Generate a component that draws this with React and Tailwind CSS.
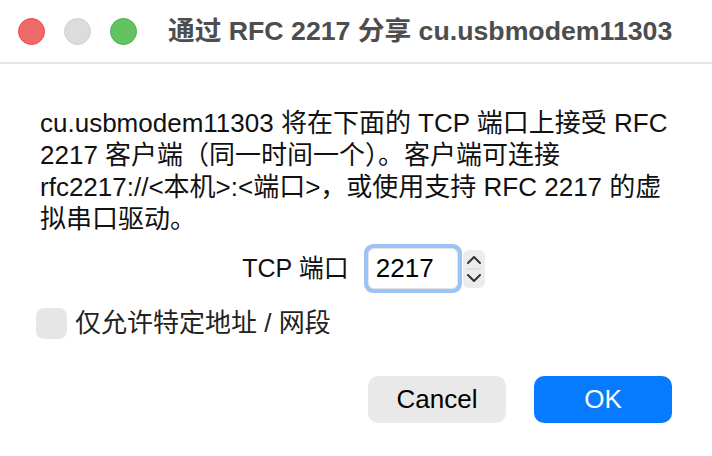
const font = { fontFamily: '"Liberation Sans", "Noto Sans CJK SC", sans-serif' }

// ── Title bar with traffic lights
function TitleBar() {
  return (
    <div className="h-[64px] flex items-center border-b-2 border-[#e6e6e6] pl-[18px]">
      <div className="flex items-center gap-[19px]">
        <span className="w-[27px] h-[27px] rounded-full bg-[#ee6a6a] border border-[#de4c4c]" />
        <span className="w-[27px] h-[27px] rounded-full bg-[#dcdcdc] border border-[#d0d0d0]" />
        <span className="w-[27px] h-[27px] rounded-full bg-[#62c363] border border-[#4daa4e]" />
      </div>
      <div className="ml-[31px] text-[26.7px] font-bold text-[#4d4d4d] whitespace-nowrap">
        通过 RFC 2217 分享 cu.usbmodem11303
      </div>
    </div>
  )
}

// ── Stepper arrows
function Stepper() {
  return (
    <div className="ml-[1px] w-[22px] h-[38px] rounded-[6px] bg-[#ececec]">
      <svg width="22" height="38" viewBox="0 0 22 38" fill="none" stroke="#333" strokeWidth="2" strokeLinecap="round" strokeLinejoin="round">
        <polyline points="5,13 11,7 17,13" />
        <line x1="4" y1="19" x2="18" y2="19" stroke="#d2d2d2" strokeWidth="1" />
        <polyline points="5,25 11,31 17,25" />
      </svg>
    </div>
  )
}

// ── Port field with stepper
function PortField() {
  return (
    <div className="flex items-center justify-center mt-[9px] pl-[15px]">
      <span className="text-[25px] text-[#111] mr-[15px] whitespace-nowrap">TCP 端口</span>
      <div className="w-[98px] h-[49px] rounded-[9px] bg-[#9cc2f7] p-[4px]">
        <div className="w-full h-full rounded-[6px] bg-white border border-[#e4e4e4] flex items-center pl-[7px] text-[26px] text-black">
          2217
        </div>
      </div>
      <Stepper />
    </div>
  )
}

export default function App() {
  return (
    <div className="w-[712px] h-[456px] bg-white overflow-hidden" style={font}>
      <TitleBar />
      <div className="px-[40px] pt-[43px]">
        <p className="text-[26px] leading-[32px] text-[#111] whitespace-nowrap">
          cu.usbmodem11303 将在下面的 TCP 端口上接受 RFC<br />
          2217 客户端（同一时间一个）。客户端可连接<br />
          rfc2217://&lt;本机&gt;:&lt;端口&gt;，或使用支持 RFC 2217 的虚<br />
          拟串口驱动。
        </p>
      </div>
      <PortField />
      <div className="flex items-center pl-[36px] mt-[15px]">
        <span className="w-[31px] h-[31px] rounded-[8px] bg-[#e6e6e6]" />
        <span className="ml-[8px] text-[26px] leading-[31px] text-[#222] whitespace-nowrap">仅允许特定地址 / 网段</span>
      </div>
      <div className="flex justify-end gap-[28px] pr-[40px] mt-[37px]">
        <button className="w-[138px] h-[47px] rounded-[10px] bg-[#e9e9e9] text-[26px] text-black">
          Cancel
        </button>
        <button className="w-[138px] h-[47px] rounded-[10px] bg-[#067bff] text-[26px] text-white">
          OK
        </button>
      </div>
    </div>
  )
}
